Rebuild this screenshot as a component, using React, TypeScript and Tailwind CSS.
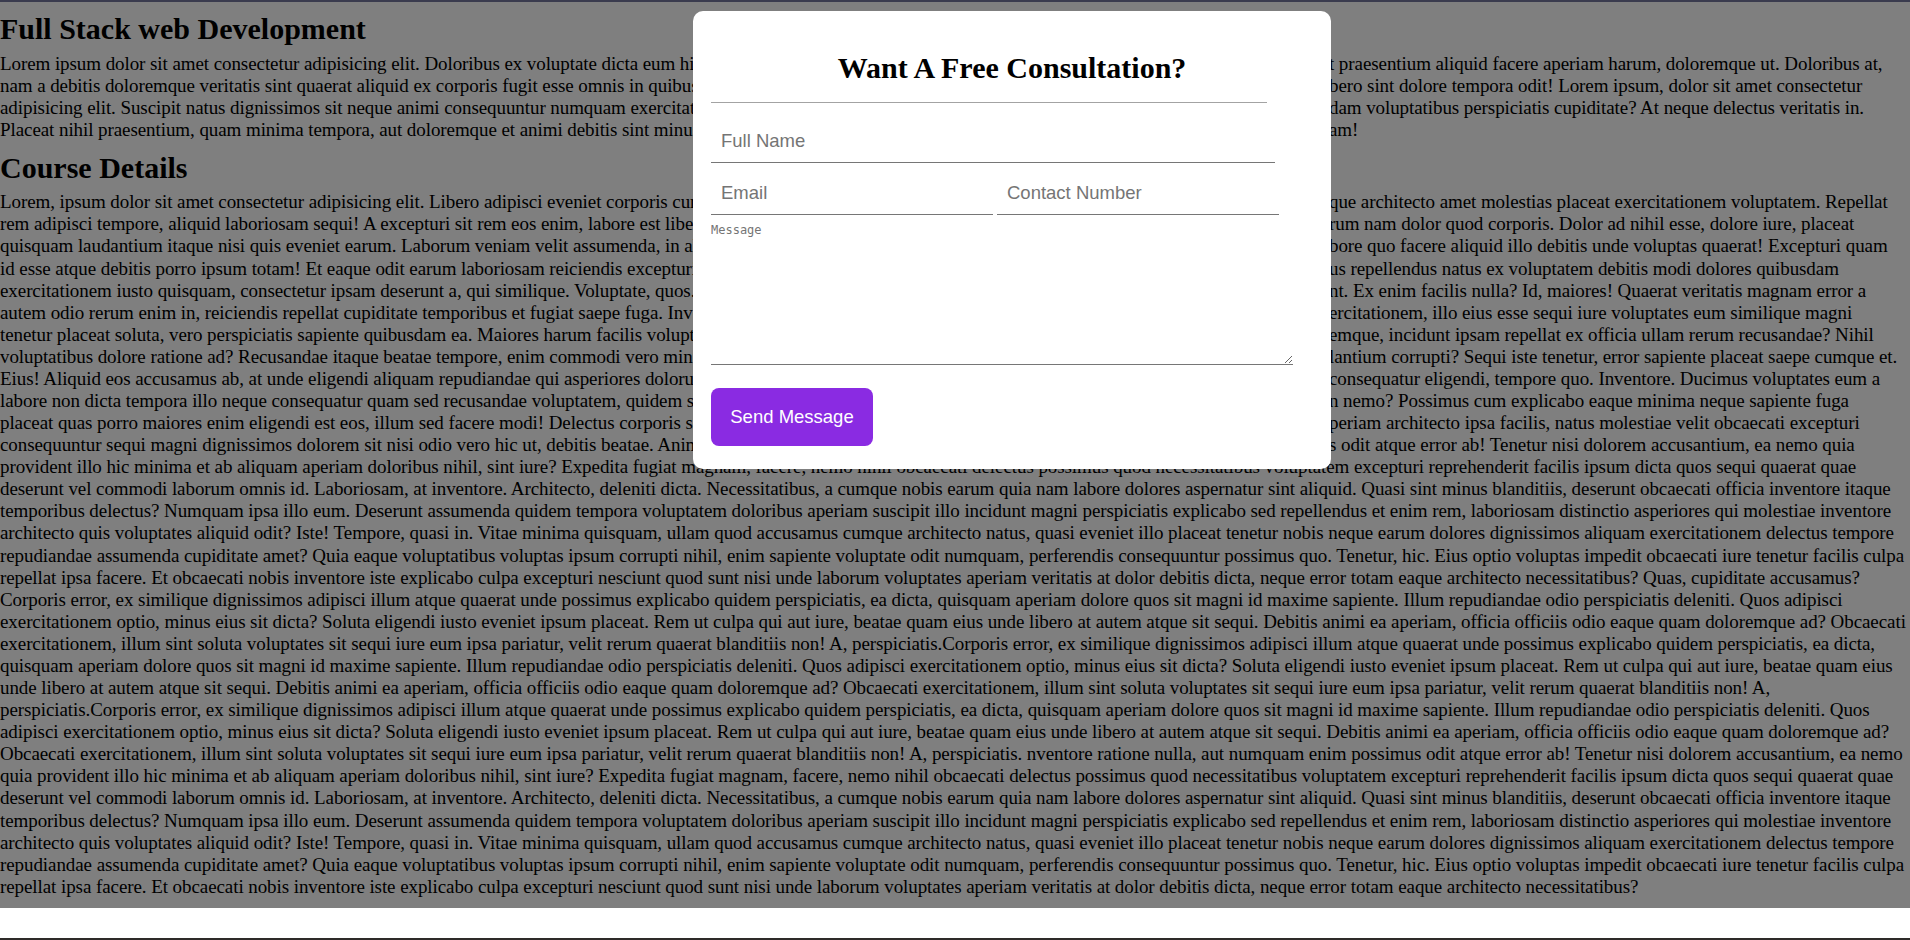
import React from "react";

const p1: [string, string][] = [
  [
    "Lorem ipsum dolor sit amet consectetur adipisicing elit. Doloribus ex voluptate dicta eum hic quae possimus nihil officiis, quisquam voluptas sequi iusto esse, sun",
    "t praesentium aliquid facere aperiam harum, doloremque ut. Doloribus at,",
  ],
  [
    "nam a debitis doloremque veritatis sint quaerat aliquid ex corporis fugit esse omnis in quibusdam. Sapiente architecto nobis eos ducimus, at quam minus li",
    "bero sint dolore tempora odit! Lorem ipsum, dolor sit amet consectetur",
  ],
  [
    "adipisicing elit. Suscipit natus dignissimos sit neque animi consequuntur numquam exercitationem similique ipsa, tempora libero nesciunt, quibus",
    "dam voluptatibus perspiciatis cupiditate? At neque delectus veritatis in.",
  ],
  [
    "Placeat nihil praesentium, quam minima tempora, aut doloremque et animi debitis sint minus sapiente nam eveniet repellat enim quia laboriosam, magn",
    "am!",
  ],
];

const c1: [string, string][] = [
  [
    "Lorem, ipsum dolor sit amet consectetur adipisicing elit. Libero adipisci eveniet corporis cumque voluptas, ab laboriosam dolorum amet iusto. Nesciunt at",
    "que architecto amet molestias placeat exercitationem voluptatem. Repellat",
  ],
  [
    "rem adipisci tempore, aliquid laboriosam sequi! A excepturi sit rem eos enim, labore est libero ipsam nulla accusamus, nobis quasi velit ha",
    "rum nam dolor quod corporis. Dolor ad nihil esse, dolore iure, placeat",
  ],
  [
    "quisquam laudantium itaque nisi quis eveniet earum. Laborum veniam velit assumenda, in alias ipsum, fugit nostrum cumque natus la",
    "bore quo facere aliquid illo debitis unde voluptas quaerat! Excepturi quam",
  ],
  [
    "id esse atque debitis porro ipsum totam! Et eaque odit earum laboriosam reiciendis excepturi dolorem sequi, voluptatum quis aliquid temporib",
    "us repellendus natus ex voluptatem debitis modi dolores quibusdam",
  ],
  [
    "exercitationem iusto quisquam, consectetur ipsam deserunt a, qui similique. Voluptate, quos. Expedita, nemo dicta officiis quae su",
    "nt. Ex enim facilis nulla? Id, maiores! Quaerat veritatis magnam error a",
  ],
  [
    "autem odio rerum enim in, reiciendis repellat cupiditate temporibus et fugiat saepe fuga. Inventore, tenetur quo dolores nostrum ex",
    "ercitationem, illo eius esse sequi iure voluptates eum similique magni",
  ],
  [
    "tenetur placeat soluta, vero perspiciatis sapiente quibusdam ea. Maiores harum facilis voluptatum repellendus nesciunt, quod dolor",
    "emque, incidunt ipsam repellat ex officia ullam rerum recusandae? Nihil",
  ],
  [
    "voluptatibus dolore ratione ad? Recusandae itaque beatae tempore, enim commodi vero minima, amet quas dolorem ipsa lau",
    "lantium corrupti? Sequi iste tenetur, error sapiente placeat saepe cumque et.",
  ],
  [
    "Eius! Aliquid eos accusamus ab, at unde eligendi aliquam repudiandae qui asperiores dolorum, itaque nihil quaerat delectus",
    "consequatur eligendi, tempore quo. Inventore. Ducimus voluptates eum a",
  ],
  [
    "labore non dicta tempora illo neque consequatur quam sed recusandae voluptatem, quidem sint molestiae, ipsa laudantium esse quos i",
    "n nemo? Possimus cum explicabo eaque minima neque sapiente fuga",
  ],
  [
    "placeat quas porro maiores enim eligendi est eos, illum sed facere modi! Delectus corporis sint dolore cum, voluptate rerum a",
    "periam architecto ipsa facilis, natus molestiae velit obcaecati excepturi",
  ],
  [
    "consequuntur sequi magni dignissimos dolorem sit nisi odio vero hic ut, debitis beatae. Animi ipsa inventore ratione nulla, aut numquam enim possimu",
    "s odit atque error ab! Tenetur nisi dolorem accusantium, ea nemo quia",
  ],
];

const A1 =
  "deserunt vel commodi laborum omnis id. Laboriosam, at inventore. Architecto, deleniti dicta. Necessitatibus, a cumque nobis earum quia nam labore dolores aspernatur sint aliquid. Quasi sint minus blanditiis, deserunt obcaecati officia inventore itaque";
const A2 =
  "temporibus delectus? Numquam ipsa illo eum. Deserunt assumenda quidem tempora voluptatem doloribus aperiam suscipit illo incidunt magni perspiciatis explicabo sed repellendus et enim rem, laboriosam distinctio asperiores qui molestiae inventore";
const A3 =
  "architecto quis voluptates aliquid odit? Iste! Tempore, quasi in. Vitae minima quisquam, ullam quod accusamus cumque architecto natus, quasi eveniet illo placeat tenetur nobis neque earum dolores dignissimos aliquam exercitationem delectus tempore";
const A4 =
  "repudiandae assumenda cupiditate amet? Quia eaque voluptatibus voluptas ipsum corrupti nihil, enim sapiente voluptate odit numquam, perferendis consequuntur possimus quo. Tenetur, hic. Eius optio voluptas impedit obcaecati iure tenetur facilis culpa";

const c2: string[] = [
  "provident illo hic minima et ab aliquam aperiam doloribus nihil, sint iure? Expedita fugiat magnam, facere, nemo nihil obcaecati delectus possimus quod necessitatibus voluptatem excepturi reprehenderit facilis ipsum dicta quos sequi quaerat quae",
  A1,
  A2,
  A3,
  A4,
  "repellat ipsa facere. Et obcaecati nobis inventore iste explicabo culpa excepturi nesciunt quod sunt nisi unde laborum voluptates aperiam veritatis at dolor debitis dicta, neque error totam eaque architecto necessitatibus? Quas, cupiditate accusamus?",
  "Corporis error, ex similique dignissimos adipisci illum atque quaerat unde possimus explicabo quidem perspiciatis, ea dicta, quisquam aperiam dolore quos sit magni id maxime sapiente. Illum repudiandae odio perspiciatis deleniti. Quos adipisci",
  "exercitationem optio, minus eius sit dicta? Soluta eligendi iusto eveniet ipsum placeat. Rem ut culpa qui aut iure, beatae quam eius unde libero at autem atque sit sequi. Debitis animi ea aperiam, officia officiis odio eaque quam doloremque ad? Obcaecati",
  "exercitationem, illum sint soluta voluptates sit sequi iure eum ipsa pariatur, velit rerum quaerat blanditiis non! A, perspiciatis.Corporis error, ex similique dignissimos adipisci illum atque quaerat unde possimus explicabo quidem perspiciatis, ea dicta,",
  "quisquam aperiam dolore quos sit magni id maxime sapiente. Illum repudiandae odio perspiciatis deleniti. Quos adipisci exercitationem optio, minus eius sit dicta? Soluta eligendi iusto eveniet ipsum placeat. Rem ut culpa qui aut iure, beatae quam eius",
  "unde libero at autem atque sit sequi. Debitis animi ea aperiam, officia officiis odio eaque quam doloremque ad? Obcaecati exercitationem, illum sint soluta voluptates sit sequi iure eum ipsa pariatur, velit rerum quaerat blanditiis non! A,",
  "perspiciatis.Corporis error, ex similique dignissimos adipisci illum atque quaerat unde possimus explicabo quidem perspiciatis, ea dicta, quisquam aperiam dolore quos sit magni id maxime sapiente. Illum repudiandae odio perspiciatis deleniti. Quos",
  "adipisci exercitationem optio, minus eius sit dicta? Soluta eligendi iusto eveniet ipsum placeat. Rem ut culpa qui aut iure, beatae quam eius unde libero at autem atque sit sequi. Debitis animi ea aperiam, officia officiis odio eaque quam doloremque ad?",
  "Obcaecati exercitationem, illum sint soluta voluptates sit sequi iure eum ipsa pariatur, velit rerum quaerat blanditiis non! A, perspiciatis. nventore ratione nulla, aut numquam enim possimus odit atque error ab! Tenetur nisi dolorem accusantium, ea nemo",
  "quia provident illo hic minima et ab aliquam aperiam doloribus nihil, sint iure? Expedita fugiat magnam, facere, nemo nihil obcaecati delectus possimus quod necessitatibus voluptatem excepturi reprehenderit facilis ipsum dicta quos sequi quaerat quae",
  A1,
  A2,
  A3,
  A4,
  "repellat ipsa facere. Et obcaecati nobis inventore iste explicabo culpa excepturi nesciunt quod sunt nisi unde laborum voluptates aperiam veritatis at dolor debitis dicta, neque error totam eaque architecto necessitatibus?",
];

function SplitLine({ left, right }: { left: string; right: string }) {
  return (
    <span className="flex whitespace-nowrap">
      <span className="w-[1329px] shrink-0 overflow-hidden">{left}</span>
      <span>{right}</span>
    </span>
  );
}

export default function App() {
  return (
    <div className="relative flex h-[940px] w-full flex-col overflow-hidden bg-white font-['Liberation_Serif','Times_New_Roman',serif] text-black">
      <div className="h-[2px] shrink-0 bg-[#3a3b4e]" />

      <main className="relative shrink-0 pt-[10px] pb-[10px]">
        <h2 className="mb-[8px] text-[30px] font-bold leading-[33px]">Full Stack web Development</h2>
        <p className="mb-[10px] text-[19px] leading-[22.08px] tracking-[-0.08px]">
          {p1.map(([l, r], i) => (
            <SplitLine key={i} left={l} right={r} />
          ))}
        </p>
        <h2 className="mb-[7px] text-[30px] font-bold leading-[33px]">Course Details</h2>
        <p className="text-[19px] leading-[22.08px] tracking-[-0.08px]">
          {c1.map(([l, r], i) => (
            <SplitLine key={i} left={l} right={r} />
          ))}
          {c2.map((t, i) => (
            <span key={i} className="block whitespace-nowrap">
              {t}
            </span>
          ))}
        </p>
        <div className="absolute inset-0 bg-black/50" />
      </main>

      <div className="flex-1 bg-white" />
      <div className="h-[2px] shrink-0 bg-[#2e2b29]" />

      <form
        className="absolute left-[693px] top-[11px] flex h-[458px] w-[638px] flex-col rounded-[10px] bg-white px-[18px] pt-[40px]"
        onSubmit={(e) => e.preventDefault()}
      >
        <h2 className="text-center text-[30px] font-bold leading-[33px]">Want A Free Consultation?</h2>
        <div className="mt-[18px] h-px w-[556px] bg-[#a3a3a3]" />
        <input
          type="text"
          placeholder="Full Name"
          className="mt-[18px] h-[42px] w-[564px] border-b border-[#767676] px-[10px] pb-[2px] font-['Liberation_Sans',Arial,sans-serif] text-[18.5px] outline-none placeholder:text-[#757575]"
        />
        <div className="mt-[10px] flex gap-[4px]">
          <input
            type="email"
            placeholder="Email"
            className="h-[42px] w-[282px] border-b border-[#767676] px-[10px] pb-[2px] font-['Liberation_Sans',Arial,sans-serif] text-[18.5px] outline-none placeholder:text-[#757575]"
          />
          <input
            type="tel"
            placeholder="Contact Number"
            className="h-[42px] w-[282px] border-b border-[#767676] px-[10px] pb-[2px] font-['Liberation_Sans',Arial,sans-serif] text-[18.5px] outline-none placeholder:text-[#757575]"
          />
        </div>
        <textarea
          placeholder="Message"
          className="mt-[6px] h-[144px] w-[582px] resize border-b border-[#767676] px-0 pt-[3px] font-['DejaVu_Sans_Mono',monospace] text-[12px] leading-[13.5px] outline-none placeholder:text-[#757575]"
        />
        <button
          type="submit"
          className="mt-[23px] h-[58px] w-[162px] rounded-[8px] bg-[#8a2be2] font-['Liberation_Sans',Arial,sans-serif] text-[18.5px] text-white"
        >
          Send Message
        </button>
      </form>
    </div>
  );
}
